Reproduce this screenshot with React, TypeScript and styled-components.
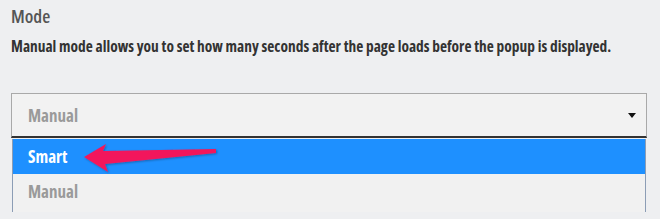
import React from "react";
import styled, { createGlobalStyle } from "styled-components";

const GlobalStyle = createGlobalStyle`
  html, body {
    margin: 0;
    padding: 0;
    background: #eeeff1;
  }
  body {
    font-family: "Open Sans", "DejaVu Sans Condensed", sans-serif;
    font-stretch: condensed;
  }
`;

const Wrapper = styled.div`
  width: 660px;
  height: 219px;
  box-sizing: border-box;
  padding: 2px 13px 0 11px;
  overflow: hidden;
`;

const Title = styled.h3`
  margin: 0;
  font-size: 18.5px;
  font-weight: 600;
  color: #555;
  line-height: 28px;
`;

const Description = styled.p`
  margin: 7px 0 0;
  font-size: 15.4px;
  font-weight: 700;
  color: #333;
  line-height: 20px;
`;

const SelectBox = styled.div`
  position: relative;
  margin-top: 36px;
  height: 42px;
  display: flex;
  align-items: center;
  justify-content: space-between;
  padding: 0 10px 0 16px;
  background: #f2f2f2;
  border: 1px solid #a9a9a9;
  border-bottom: 2px solid #333;
`;

const Placeholder = styled.span`
  font-size: 17px;
  font-weight: 700;
  color: #9a9a9a;
`;

const Caret = styled.span`
  width: 0;
  height: 0;
  border-left: 4px solid transparent;
  border-right: 4px solid transparent;
  border-top: 5px solid #111;
`;

const List = styled.ul`
  position: relative;
  list-style: none;
  margin: 1px 1px 0 1px;
  padding: 0 0 3px;
  border-left: 1px solid #8c9db5;
  border-right: 1px solid #8c9db5;
  background: #f1f1f1;
`;

const Option = styled.li<{ $active?: boolean }>`
  height: 35px;
  display: flex;
  align-items: center;
  padding-left: 15px;
  font-size: 17px;
  font-weight: 700;
  background: ${(p) => (p.$active ? "#1e90ff" : "transparent")};
  color: ${(p) => (p.$active ? "#fff" : "#9a9a9a")};
`;

const Pointer = styled.svg`
  position: absolute;
  left: 70px;
  top: 0;
  overflow: visible;
`;

const App = (): JSX.Element => {
  return (
    <Wrapper>
      <GlobalStyle />
      <Title>Mode</Title>
      <Description>
        Manual mode allows you to set how many seconds after the page loads
        before the popup is displayed.
      </Description>
      <SelectBox>
        <Placeholder>Manual</Placeholder>
        <Caret />
      </SelectBox>
      <List>
        <Option $active>Smart</Option>
        <Option>Manual</Option>
        <Pointer width="135" height="35" viewBox="0 0 135 35">
          <defs>
            <filter id="sh" x="-10%" y="-30%" width="130%" height="160%">
              <feDropShadow dx="1" dy="1" stdDeviation="1" floodColor="#000" floodOpacity="0.3" />
            </filter>
          </defs>
          <polygon
            points="1,18 23,5 20,12 133,10 133,14 22,25 25,33"
            fill="#f2195b"
            filter="url(#sh)"
          />
        </Pointer>
      </List>
    </Wrapper>
  );
};

export default App;
